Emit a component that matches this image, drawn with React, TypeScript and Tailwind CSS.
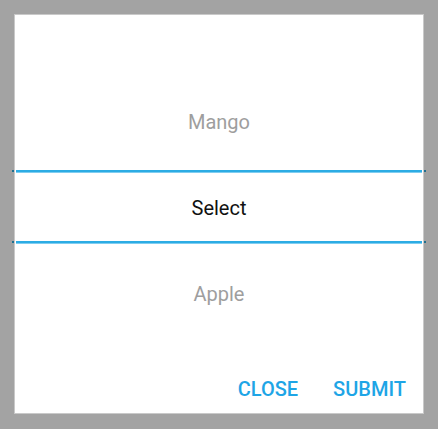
import React from 'react';

const items = ['Mango', 'Select', 'Apple'];

function Divider() {
  return (
    <div className="relative mx-[1px] h-[3px] bg-[#2cace4] border-b border-[#7fcdf0]">
      <span className="absolute left-[-4px] top-0 w-[2px] h-[2px] bg-[#1f6f8f]" />
      <span className="absolute right-[-4px] top-0 w-[2px] h-[2px] bg-[#1f6f8f]" />
    </div>
  );
}

export default function App() {
  return (
    <div
      className="w-[438px] h-[429px] bg-[#a3a3a3] p-[14px] pb-[15px]"
      style={{ fontFamily: 'Roboto, "Noto Sans", sans-serif' }}
    >
      <div className="relative h-full w-full bg-white border border-[#c9c9c9] flex flex-col">
        {/* picker */}
        <div className="flex flex-col">
          <div className="h-[155px] flex items-end justify-center pb-[36px]">
            <span className="text-[20px] leading-[24px] text-[#9e9e9e]">{items[0]}</span>
          </div>
          <Divider />
          <div className="h-[68px] flex items-center justify-center pt-[1px]">
            <span className="text-[20px] leading-[24px] text-[#111111]">{items[1]}</span>
          </div>
          <Divider />
          <div className="h-[62px] flex items-end justify-center">
            <span className="text-[20px] leading-[24px] text-[#9e9e9e]">{items[2]}</span>
          </div>
        </div>
        {/* actions */}
        <div className="flex-1 flex items-end justify-end gap-[35px] pr-[17px] pb-[12px]">
          <button className="text-[20px] leading-[24px] font-medium text-[#1ea5e6]">CLOSE</button>
          <button className="text-[20px] leading-[24px] font-medium text-[#1ea5e6]">SUBMIT</button>
        </div>
      </div>
    </div>
  );
}
